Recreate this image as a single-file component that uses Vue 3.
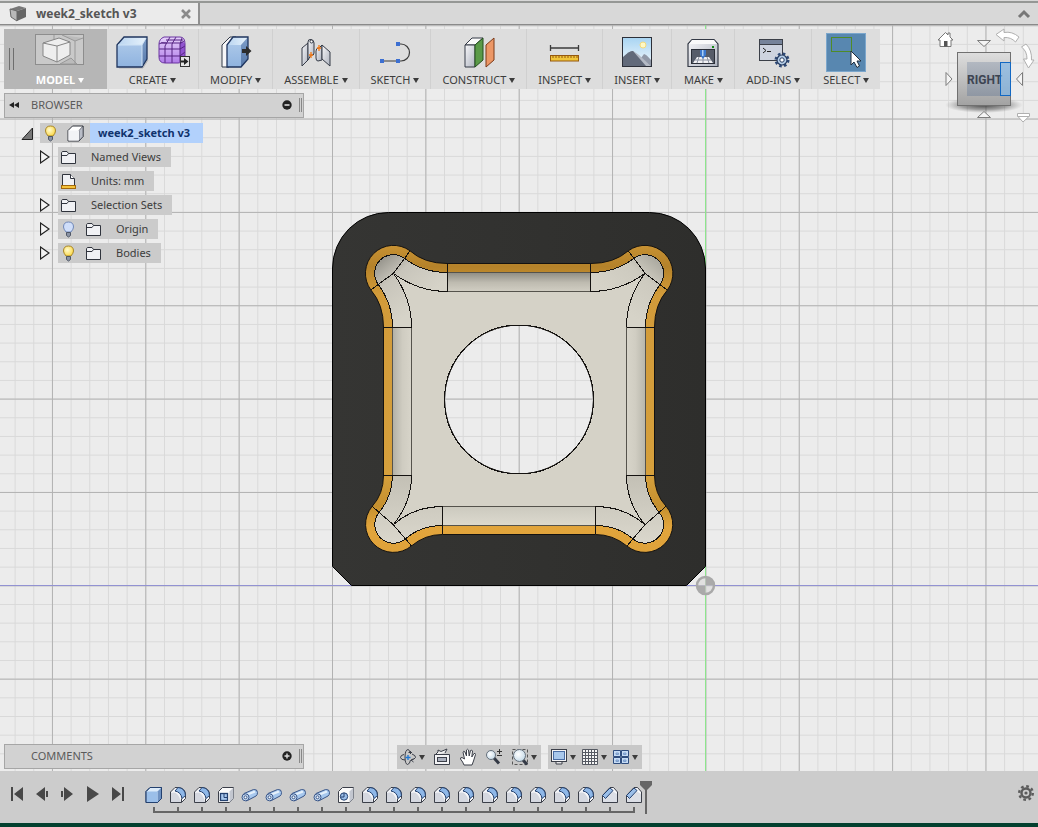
<script setup>
import { ref, computed } from 'vue';

const tools = [
  { name: 'CREATE', icons: ['box', 'mesh'], wide: true },
  { name: 'MODIFY', icons: ['modify'] },
  { name: 'ASSEMBLE', icons: ['assemble'] },
  { name: 'SKETCH', icons: ['sketch'] },
  { name: 'CONSTRUCT', icons: ['construct'] },
  { name: 'INSPECT', icons: ['inspect'] },
  { name: 'INSERT', icons: ['insert'] },
  { name: 'MAKE', icons: ['make'] },
  { name: 'ADD-INS', icons: ['addins'] },
  { name: 'SELECT', icons: ['select'] },
];

const nodes = ref([
  { name: 'Named Views', icons: ['folder'], expandable: true },
  { name: 'Units: mm', icons: ['units'], expandable: false },
  { name: 'Selection Sets', icons: ['folder'], expandable: true },
  { name: 'Origin', icons: ['bulb-off', 'folder'], expandable: true },
  { name: 'Bodies', icons: ['bulb-on', 'folder'], expandable: true },
]);

const transport = [
  { name: 'Go to start', path: 'M1 1h2v14h-2zM13 1v14l-9 -7z' },
  { name: 'Step back', path: 'M10 1v14l-9 -7zM11 5h2v6h-2z' },
  { name: 'Step forward', path: 'M1 5h2v6h-2zM4 1v14l9 -7z' },
  { name: 'Play', path: 'M2 0v16l12 -8z' },
  { name: 'Go to end', path: 'M2 1v14l9 -7zM12 1h2v14h-2z' },
];

const repeat = (name, count) => Array.from({ length: count }, () => name);

const features = computed(() => [
  'f-box',
  ...repeat('f-fillet', 2),
  'f-shell',
  ...repeat('f-cylinder', 4),
  'f-hole',
  ...repeat('f-fillet', 10),
  ...repeat('f-chamfer', 2),
]);

const viewTools = [
  { name: 'orbit', menu: true },
  { name: 'look', menu: false },
  { name: 'pan', menu: false },
  { name: 'zoom', menu: false },
  { name: 'fit', menu: true },
];

const displayTools = ['display', 'grid', 'views'];

const treeOpen = ref(true);
</script>

<template>
  <div class="app">
    <svg class="symbols" aria-hidden="true">
      <defs>
        <linearGradient id="g-front" x1="0" y1="0" x2="0" y2="1">
          <stop offset="0" stop-color="#a9c6e8" />
          <stop offset="1" stop-color="#8fb3df" />
        </linearGradient>
        <linearGradient id="g-side" x1="0" y1="0" x2="0" y2="1">
          <stop offset="0" stop-color="#7f9fca" />
          <stop offset="1" stop-color="#5577a8" />
        </linearGradient>
        <linearGradient id="g-top" x1="0" y1="0" x2="1" y2="0">
          <stop offset="0" stop-color="#b9d4f0" />
          <stop offset="1" stop-color="#e8f3fc" />
        </linearGradient>
        <linearGradient id="g-metal" x1="0" y1="0" x2="1" y2="1">
          <stop offset="0" stop-color="#f7f7f9" />
          <stop offset="1" stop-color="#aeb3bf" />
        </linearGradient>
        <linearGradient id="g-mesh" x1="0" y1="0" x2="0" y2="1">
          <stop offset="0" stop-color="#e6d2fb" />
          <stop offset="1" stop-color="#b07be8" />
        </linearGradient>
        <linearGradient id="g-sky" x1="0" y1="0" x2="0" y2="1">
          <stop offset="0" stop-color="#a8d4f2" />
          <stop offset="1" stop-color="#f2f9fd" />
        </linearGradient>
        <radialGradient id="g-yellow" cx="0.4" cy="0.4" r="0.6">
          <stop offset="0" stop-color="#fffbd0" />
          <stop offset="1" stop-color="#fbd94d" />
        </radialGradient>
        <radialGradient id="g-lens" cx="0.4" cy="0.4" r="0.6">
          <stop offset="0" stop-color="#ffffff" />
          <stop offset="1" stop-color="#c8dcea" />
        </radialGradient>
      </defs>

      <symbol id="i-box" viewBox="0 0 40 40">
        <path d="M7 36h24l5-8" fill="none" stroke="#b5b5b5" />
        <path d="M5 13L12 5H35L30 13Z" fill="url(#g-top)" />
        <path d="M30 13L35 5V27L30 35Z" fill="url(#g-side)" />
        <path d="M5 13H30V35H5Z" fill="url(#g-front)" />
        <path d="M5 13L12 5H35V27L30 35H5Z" fill="none" stroke="#1f355e" stroke-width="1.3" />
        <path d="M6 13H30V34M30 13L34 6" fill="none" stroke="#cfe2f5" stroke-width="1" />
      </symbol>

      <symbol id="i-mesh" viewBox="0 0 40 40">
        <path d="M11 5H27Q32 5 32 12V24Q31 31 25 31H12Q6 31 6 25V12Q6 7 11 5Z" fill="url(#g-mesh)" />
        <path d="M27 10Q31 9 32 12V24Q30 30 27 29Z" fill="#9154d0" />
        <path
          d="M6 17H27L32 14M6 24H27L32 20M8 11H28L31 9M13 8H30M12 31V14L17 5M19 31V12L23 5M27 30V12L29 6M6 12Q8 10 13 11"
          fill="none"
          stroke="#552381"
          stroke-width="1"
        />
        <path d="M11 5H27Q32 5 32 12V24Q31 31 25 31H12Q6 31 6 25V12Q6 7 11 5Z" fill="none" stroke="#6a35a0" />
        <rect x="27.5" y="24.5" width="9" height="10" fill="#e5e5e5" stroke="#333" />
        <path d="M28 28.500H31V26L35.500 29.500L31 33V30.500H28Z" fill="#222" />
      </symbol>

      <symbol id="i-modify" viewBox="0 0 40 40">
        <path d="M6 13L14 5H20L13 13V35H6Z" fill="#f6f6f8" stroke="#333a48" />
        <path d="M11 13L17 5H32L25 13Z" fill="url(#g-top)" />
        <path d="M25 13L32 5V27L25 35Z" fill="url(#g-side)" />
        <path d="M11 13H25V35H11Z" fill="url(#g-front)" />
        <path d="M11 13L17 5H32V27L25 35H11Z" fill="none" stroke="#1f355e" stroke-width="1.3" />
        <path d="M26 17H30V14L35.500 19L30 24V21H26Z" fill="#2c2c2c" />
      </symbol>

      <symbol id="i-assemble" viewBox="0 0 40 40">
        <path d="M6 16L12 11V28L6 34Z" fill="url(#g-metal)" stroke="#343a46" />
        <path d="M12 10Q12 7 15 7.500Q18 8 18 11V21Q18 24 15 23L12 28Z" fill="url(#g-metal)" stroke="#343a46" />
        <circle cx="15.500" cy="9.500" r="1.500" fill="#fff" stroke="#343a46" />
        <path d="M20 19Q20 16 23 16L26 13V28L22 29Q20 29 20 26Z" fill="url(#g-metal)" stroke="#343a46" />
        <path d="M26 13L34 20V34L26 27Z" fill="url(#g-metal)" stroke="#343a46" />
        <path d="M15 20V26M13 23H17M23 13V19M21 16H25" stroke="#f57a16" stroke-width="1.300" />
      </symbol>

      <symbol id="i-sketch" viewBox="0 0 40 40">
        <path d="M7 29H26A8.500 8.500 0 0 0 26 12H23" fill="none" stroke="#3b3b3b" stroke-width="1.200" />
        <path d="M5 27h4v4h-4zM21 27h4v4h-4zM21 10h4v4h-4z" fill="#3c6fd1" />
      </symbol>

      <symbol id="i-construct" viewBox="0 0 40 40">
        <path d="M6 13L13 6H24L16 13Z" fill="#fafafa" stroke="#343a46" />
        <path d="M6 13H16V35H6Z" fill="url(#g-metal)" stroke="#343a46" />
        <path d="M16 13L24 6V28L16 35Z" fill="#5a9a48" stroke="#24501e" />
        <path d="M27 13L35 6V28L27 35Z" fill="#ec9766" stroke="#7c3a18" />
      </symbol>

      <symbol id="i-inspect" viewBox="0 0 40 40">
        <path d="M5.500 13V19M33.500 13V19M5.500 16H33.500" stroke="#3b3b3b" stroke-width="1.300" />
        <rect x="5.500" y="23.500" width="28" height="5.500" fill="#f0c53a" stroke="#96590f" />
        <path d="M8 24v2M11 24v2M14 24v2M17 24v2M20 24v2M23 24v2M26 24v2M29 24v2M32 24v2" stroke="#96590f" />
      </symbol>

      <symbol id="i-insert" viewBox="0 0 40 40">
        <rect x="5.500" y="5.500" width="29" height="29" fill="url(#g-sky)" />
        <circle cx="26" cy="13" r="3" fill="#fff8c5" stroke="#f3da7d" />
        <path d="M6 26Q14 17 17 20L24 26L27 22Q29 22 34 28V34H6Z" fill="#9199a8" />
        <path d="M6 25Q13 18 16 19L34 34H6Z" fill="#626a7a" />
        <path d="M16 19L22 23L34 34H29Z" fill="#b4bac5" />
        <rect x="5.500" y="5.500" width="29" height="29" fill="none" stroke="#2c2f38" />
      </symbol>

      <symbol id="i-make" viewBox="0 0 40 40">
        <path d="M5 12L9 7.500H31L35 12V34.500H5Z" fill="url(#g-metal)" stroke="#343a46" stroke-width="1.200" />
        <path d="M6 12H34L31 8H9Z" fill="#fafafa" />
        <rect x="8.500" y="17.500" width="23" height="14" fill="#565c69" stroke="#2b2f38" />
        <path d="M10 31L14 25H26L30 31Z" fill="#f1f1f4" />
        <path d="M12 28H28M16 25L14 31M20 25V31M24 25L26 31" stroke="#8c92a0" />
        <path d="M17 18H23V23L20 27L17 23Z" fill="#3c79d0" />
        <path d="M19 18h1.500v6h-1.500z" fill="#a9d0f7" />
        <rect x="29" y="14" width="2" height="2" fill="#178a17" />
      </symbol>

      <symbol id="i-addins" viewBox="0 0 40 40">
        <rect x="6.500" y="7.500" width="23" height="21" fill="#cdd3df" stroke="#3b3f48" />
        <rect x="7" y="8" width="22" height="4" fill="#76839a" />
        <path d="M7 12.500H29" stroke="#3b3f48" />
        <path d="M10 16L13 18.500L10 21M14 19.500H18" fill="none" stroke="#222" />
        <circle cx="29" cy="28" r="6.300" fill="none" stroke="#2f4a77" stroke-width="2.400" stroke-dasharray="2.600 2.350" />
        <circle cx="29" cy="28" r="5" fill="#b6cee8" stroke="#23395f" stroke-width="1.200" />
        <circle cx="29" cy="28" r="2.200" fill="#fff" stroke="#23395f" />
      </symbol>

      <symbol id="i-select" viewBox="0 0 40 40">
        <rect x="0.500" y="1.500" width="39" height="38" fill="#5887b0" stroke="#7ba6cc" />
        <rect x="5.500" y="5.500" width="20" height="14" fill="none" stroke="#4f8b28" />
        <path d="M25 19V33L28 30L31 35.500L33.500 34L31 29H35Z" fill="#fff" stroke="#1f2b3a" />
      </symbol>

      <symbol id="i-bulb-on" viewBox="0 0 15 17">
        <path d="M7.500 1Q12.500 1 12.500 6Q12.500 8 10 11H5Q2.500 8 2.500 6Q2.500 1 7.500 1Z" fill="url(#g-yellow)" stroke="#a8862a" />
        <path d="M5.500 11.500H9.500V14.500L7.500 16L5.500 14.500Z" fill="#8b94a5" stroke="#4f5766" />
      </symbol>

      <symbol id="i-bulb-off" viewBox="0 0 15 17">
        <path d="M7.500 1Q12.500 1 12.500 6Q12.500 8 10 11H5Q2.500 8 2.500 6Q2.500 1 7.500 1Z" fill="#cfdefa" stroke="#7088b8" />
        <path d="M5.500 11.500H9.500V14.500L7.500 16L5.500 14.500Z" fill="#8b94a5" stroke="#4f5766" />
      </symbol>

      <symbol id="i-folder" viewBox="0 0 15 17">
        <path d="M0.500 14.500V3.500Q1 2.500 2 2.500H6L7.500 4.500H14.500V14.500Z" fill="#f0f1f4" stroke="#30343d" />
        <path d="M1 6.500H6L7.500 4.500" fill="none" stroke="#30343d" />
      </symbol>

      <symbol id="i-units" viewBox="0 0 15 17">
        <path d="M1.500 13V1.500H9.500L13.500 5.500V13Z" fill="#f0f1f4" stroke="#30343d" />
        <path d="M9.500 1.500V5.500H13.500" fill="#fff" stroke="#30343d" />
        <rect x="0.500" y="12.500" width="14" height="3" fill="#f5c33a" stroke="#a3690c" />
      </symbol>

      <symbol id="i-body" viewBox="0 0 17 17">
        <path d="M1 5.500L5.500 1H16V11.500L12 16H1Z" fill="#fff" stroke="#30343d" />
        <path d="M12 5.500L16 1V11.500L12 16Z" fill="#b9bdc7" stroke="#30343d" stroke-width="0.600" />
        <path d="M1.500 5.500H12V15.500H1.500Z" fill="#f2f3f6" />
      </symbol>

      <symbol id="i-f-box" viewBox="0 0 18 18">
        <path d="M1 5.500L5 1.500H16.500V12.500L12.500 16.500H1Z" fill="#dcebfa" stroke="#24416f" />
        <path d="M12.500 5.500L16.500 1.500V12.500L12.500 16.500Z" fill="#6f92c2" />
        <path d="M1.500 5.500H12.500V16H1.500Z" fill="#9bbfe9" />
        <path d="M1 5.500L5 1.500H16.500V12.500L12.500 16.500H1Z" fill="none" stroke="#24416f" />
      </symbol>

      <symbol id="i-f-fillet" viewBox="0 0 18 18">
        <path d="M1.500 6L6 1.500H9Q16.500 2 16.500 9V12.500L12.500 16.500H1.500Z" fill="#f4f5f8" stroke="#3b3f49" />
        <path d="M2 7Q9 4 12 16H2Z" fill="#d5d8e0" />
        <path d="M6 5L9 1.500Q16 2 16.500 9.500L13 12.500Q12 6 6 5Z" fill="#8fb8e8" stroke="#24416f" />
        <path d="M12.500 12.500V16.500" stroke="#3b3f49" />
      </symbol>

      <symbol id="i-f-shell" viewBox="0 0 18 18">
        <path d="M1.500 5.500L5.500 1.500H16.500V12.500L12.500 16.500H1.500Z" fill="#fafafa" stroke="#3b3f49" />
        <path d="M12.500 5.500L16.500 1.500V12.500L12.500 16.500Z" fill="#c3c7d0" />
        <rect x="3.500" y="7.500" width="7" height="7" fill="#a8c8ee" stroke="#24416f" stroke-width="1.300" />
        <path d="M7 8V11.500H10" fill="none" stroke="#24416f" />
      </symbol>

      <symbol id="i-f-cylinder" viewBox="0 0 18 18">
        <path d="M3 7.500L12.500 3.500Q16.500 3 16.500 6.500Q16.500 9 15 10L5.500 15Z" fill="#a7c8ee" stroke="#3a5688" />
        <path d="M6.500 8.500L14 5.500" stroke="#e5f0fb" stroke-width="2" />
        <circle cx="4.500" cy="11.300" r="3.500" fill="#c9def5" stroke="#3a5688" />
        <circle cx="4.500" cy="11.300" r="1.500" fill="#f5f8fc" stroke="#3a5688" />
      </symbol>

      <symbol id="i-f-hole" viewBox="0 0 18 18">
        <path d="M1.500 5.500L5.500 1.500H16.500V12.500L12.500 16.500H1.500Z" fill="#fafafa" stroke="#3b3f49" />
        <path d="M12.500 5.500L16.500 1.500V12.500L12.500 16.500Z" fill="#c3c7d0" />
        <circle cx="7" cy="10.500" r="3.700" fill="#9bbfe9" stroke="#24416f" />
        <path d="M7 7V11H3.500" fill="none" stroke="#24416f" />
      </symbol>

      <symbol id="i-f-chamfer" viewBox="0 0 18 18">
        <path d="M1.500 9.500L9 1.500H12.500L16.500 6V16.500H1.500Z" fill="#f8f9fb" stroke="#3b3f49" />
        <path d="M2 12H5L12 5.500L16 8V16H2Z" fill="#dcdfe6" />
        <path d="M1.500 9.500L9 2L12 4.500L4.500 12.500Z" fill="#9bbfe9" stroke="#24416f" />
      </symbol>

      <symbol id="i-orbit" viewBox="0 0 18 18">
        <path d="M9 1.500Q6 2 6 9Q6 16 8.500 16.500Q11 16 11.500 12M9 1.500Q10.500 2 11 4" fill="none" stroke="#3b3f49" />
        <path d="M13 6Q17 7.500 16.500 9.500Q15 12 12 12M6 12Q2 12 1.500 9.500Q1.500 7 5 6.500" fill="none" stroke="#3b3f49" />
        <path d="M9.500 4.500H13M11.500 3V6M12 12.500L14.500 10.500M12 12L14.500 14" fill="none" stroke="#3b3f49" />
        <path d="M9 7V12M6.500 9.500H11.500" stroke="#1d76d2" stroke-width="1.300" />
      </symbol>

      <symbol id="i-look" viewBox="0 0 18 18">
        <path d="M2 7L5 4V2L8 3.500L14 1L12 5" fill="#eee" stroke="#3b3f49" />
        <path d="M1.500 6.500H16.500V16.500H1.500Z" fill="#f3f3f5" stroke="#3b3f49" />
        <rect x="4.500" y="9.500" width="9" height="4" fill="#aab0bd" stroke="#3b3f49" />
      </symbol>

      <symbol id="i-pan" viewBox="0 0 18 18">
        <path
          d="M5 17Q4 14 1.500 11Q1 9.500 3 9.500L5.500 11L4 4Q4.500 2.500 6 4L7.500 8L7.500 2Q8.500 0.500 9.500 2L10.200 8L11.500 2.500Q13 1.500 13.500 3L12.800 9L15 5.500Q16.500 5 16.500 6.500L14.500 13L13 17Z"
          fill="#fff"
          stroke="#3b3f49"
        />
      </symbol>

      <symbol id="i-zoom" viewBox="0 0 18 18">
        <path d="M9 10L14 15.500" stroke="#343a46" stroke-width="3" />
        <circle cx="6" cy="7" r="4.500" fill="url(#g-lens)" stroke="#65707c" />
        <path d="M14.500 1V6M12 3.500H17M12 7.500H17" stroke="#333" />
      </symbol>

      <symbol id="i-fit" viewBox="0 0 18 18">
        <rect x="1.500" y="1.500" width="15" height="15" fill="none" stroke="#555" stroke-dasharray="3 2" />
        <path d="M12 12L16 16.500" stroke="#343a46" stroke-width="3" />
        <circle cx="8.500" cy="7.500" r="6" fill="url(#g-lens)" stroke="#65707c" />
      </symbol>

      <symbol id="i-display" viewBox="0 0 18 18">
        <path d="M6 13H12V16H6Z" fill="#e5e5e8" stroke="#3b3f49" />
        <rect x="1.500" y="1.500" width="15" height="12" fill="#f4f4f6" stroke="#3b3f49" />
        <rect x="3.500" y="3.500" width="11" height="8" fill="#a9c8ec" stroke="#4a6da4" />
      </symbol>

      <symbol id="i-grid" viewBox="0 0 18 18">
        <rect x="1.500" y="1.500" width="15" height="15" fill="#f5f5f5" />
        <path
          d="M1.500 1.500H16.500V16.500H1.500ZM4.500 1V17M7.500 1V17M10.500 1V17M13.500 1V17M1 4.500H17M1 7.500H17M1 10.500H17M1 13.500H17"
          fill="none"
          stroke="#555962"
        />
      </symbol>

      <symbol id="i-views" viewBox="0 0 18 18">
        <path d="M1.500 2.500H8.500V8.500H1.500ZM9.500 2.500H16.500V8.500H9.500ZM1.500 9.500H8.500V15.500H1.500ZM9.500 9.500H16.500V15.500H9.500Z" fill="#c6dcf5" stroke="#2f4d7e" />
        <path d="M4 5H6.500V6.500H4ZM11.500 5H14V6.500H11.500ZM4 12H6.500V13.500H4ZM11.500 12H14V13.500H11.500Z" fill="#9dbfe9" stroke="#7c9cc9" />
      </symbol>
    </svg>

    <svg class="canvas" role="img" aria-label="Model, right view">
      <defs>
        <pattern id="minor" x="705.4" y="585.3" width="18.67" height="18.67" patternUnits="userSpaceOnUse">
          <path d="M0.500 0V18.670M0 0.500H18.670" stroke="#d9d9d9" fill="none" />
        </pattern>
        <pattern id="major" x="705.4" y="585.3" width="93.35" height="93.35" patternUnits="userSpaceOnUse">
          <path d="M0.500 0V93.350M0 0.500H93.350" stroke="#b2b2b2" fill="none" />
        </pattern>
        <linearGradient id="rim" gradientUnits="userSpaceOnUse" x1="0" y1="245" x2="0" y2="552">
          <stop offset="0" stop-color="#c89233" />
          <stop offset="0.070" stop-color="#b5822a" />
          <stop offset="0.100" stop-color="#c08b2e" />
          <stop offset="0.160" stop-color="#d29b3a" />
          <stop offset="0.750" stop-color="#d6a03c" />
          <stop offset="0.850" stop-color="#c5902f" />
          <stop offset="0.920" stop-color="#e2a53c" />
          <stop offset="1" stop-color="#dfa23a" />
        </linearGradient>
        <linearGradient id="wall-top" x1="0" y1="0" x2="0" y2="1">
          <stop offset="0" stop-color="#918f86" />
          <stop offset="0.500" stop-color="#bebbb0" />
          <stop offset="1" stop-color="#d2cfc4" />
        </linearGradient>
        <linearGradient id="wall-left" x1="0" y1="0" x2="1" y2="0">
          <stop offset="0" stop-color="#b3b1a7" />
          <stop offset="0.500" stop-color="#cfccc1" />
          <stop offset="1" stop-color="#d8d5ca" />
        </linearGradient>
        <linearGradient id="wall-right" x1="0" y1="0" x2="1" y2="0">
          <stop offset="0" stop-color="#d8d5ca" />
          <stop offset="0.500" stop-color="#d0cdc2" />
          <stop offset="1" stop-color="#b9b7ac" />
        </linearGradient>
        <linearGradient id="wall-bottom" x1="0" y1="0" x2="0" y2="1">
          <stop offset="0" stop-color="#cbc9be" />
          <stop offset="1" stop-color="#dcd9ce" />
        </linearGradient>
        <linearGradient id="corner-tl" x1="0.100" y1="0" x2="0.650" y2="0.650">
          <stop offset="0" stop-color="#918f87" />
          <stop offset="0.400" stop-color="#c8c5bb" />
          <stop offset="1" stop-color="#d6d3c8" />
        </linearGradient>
        <linearGradient id="corner-tr" x1="0.900" y1="0" x2="0.350" y2="0.650">
          <stop offset="0" stop-color="#a6a49b" />
          <stop offset="0.400" stop-color="#cdcabf" />
          <stop offset="1" stop-color="#d6d3c8" />
        </linearGradient>
        <linearGradient id="corner-b" x1="0" y1="0" x2="0" y2="1">
          <stop offset="0" stop-color="#c3c0b5" />
          <stop offset="1" stop-color="#dad7cc" />
        </linearGradient>
        <linearGradient id="plate" x1="0" y1="0" x2="1" y2="0">
          <stop offset="0" stop-color="#353533" />
          <stop offset="1" stop-color="#2e2e2c" />
        </linearGradient>
      </defs>

      <rect width="100%" height="100%" fill="#ececec" />
      <rect width="100%" height="100%" fill="url(#minor)" />
      <rect width="100%" height="100%" fill="url(#major)" />
      <line x1="0" x2="100%" y1="585.5" y2="585.5" stroke="#9292d2" />
      <line x1="705.5" x2="705.5" y1="0" y2="100%" stroke="#8ce68c" />

      <path
        d="M332.500 268A56 56 0 0 1 388.500 212.500H649.500A56 56 0 0 1 705.500 268V566.500L686.500 585.500H351.500L332.500 566.500ZM444.500 399.500A74.500 74.500 0 0 0 593.500 399.500A74.500 74.500 0 0 0 444.500 399.500Z"
        fill="url(#plate)"
        fill-rule="evenodd"
        stroke="#000"
      />
      <path
        d="M447.300 263.500H590.700Q614 263.500 628.300 250.800A28 28 0 0 1 667.400 290Q654.500 304.500 654.500 327.300V475.300Q654.500 494 666.100 506.300A28 28 0 0 1 626.800 545.900Q613 534.500 595.300 534.500H442.300Q425 534.500 411.500 545.900A28 28 0 0 1 372.200 506.300Q383.500 494 383.500 475.300V327.300Q383.500 304.500 370.900 290A28 28 0 0 1 410 250.800Q424 263.500 447.300 263.500ZM444.500 399.500A74.500 74.500 0 0 0 593.500 399.500A74.500 74.500 0 0 0 444.500 399.500Z"
        fill="url(#rim)"
        fill-rule="evenodd"
        stroke="#141210"
      />
      <path
        d="M447.300 272.500H590.700Q615.500 272.500 633.900 258.300A18.700 18.700 0 0 1 660 284.500Q645.500 304 645.500 327.300V475.300Q645.500 496 659.100 512.400A18.700 18.700 0 0 1 632.800 538.800Q617 525.500 595.300 525.500H442.300Q421 525.500 405.500 538.800A18.700 18.700 0 0 1 379.200 512.400Q392.500 496 392.500 475.300V327.300Q392.500 304 378.300 284.500A18.700 18.700 0 0 1 404.400 258.300Q423 272.500 447.300 272.500ZM444.500 399.500A74.500 74.500 0 0 0 593.500 399.500A74.500 74.500 0 0 0 444.500 399.500Z"
        fill="#d5d2c7"
        fill-rule="evenodd"
      />
      <rect x="447" y="273" width="144" height="19" fill="url(#wall-top)" />
      <rect x="393" y="327" width="19" height="148" fill="url(#wall-left)" />
      <rect x="626" y="327" width="19" height="148" fill="url(#wall-right)" />
      <rect x="442" y="506" width="153" height="19" fill="url(#wall-bottom)" />
      <path
        d="M447.500 291.500Q418 291.500 393.300 273.300Q411.500 298 411.500 327.500H392.500Q392.500 304 378.300 284.500A18.700 18.700 0 0 1 404.400 258.300Q423 272.500 447.500 272.500Z"
        fill="url(#corner-tl)"
      />
      <path
        d="M590.500 291.500Q620 291.500 645 273.300Q626.500 298 626.500 327.500H645.500Q645.500 304 660 284.500A18.700 18.700 0 0 0 633.900 258.300Q615.500 272.500 590.500 272.500Z"
        fill="url(#corner-tr)"
      />
      <path
        d="M442.500 506.500Q414 506.500 393.300 524.700Q411.500 503 411.500 475.500H392.500Q392.500 496 379.200 512.400A18.700 18.700 0 0 0 405.500 538.800Q421 525.500 442.500 525.500Z"
        fill="url(#corner-b)"
      />
      <path
        d="M595.500 506.500Q624 506.500 645 524.700Q626.500 503 626.500 475.500H645.500Q645.500 496 659.100 512.400A18.700 18.700 0 0 1 632.800 538.800Q617 525.500 595.500 525.500Z"
        fill="url(#corner-b)"
      />
      <g fill="none" stroke="#55534c">
        <path d="M447 272.500H591M447 291.500H591M392.500 327V475M411.500 327V475M626.500 327V475M645.500 327V475M442 506.500H595M442 525.500H595" />
      </g>
      <g fill="none" stroke="#141210" shape-rendering="crispEdges">
        <path d="M447.500 263V291.500M590.500 263V291.500M383 327.500H411.500M626.500 327.500H655M383 475.500H411.500M626.500 475.500H655M442.500 506V534M595.500 506V534" />
        <path d="M447.500 272.500Q423 272.500 404.400 258.300A18.700 18.700 0 0 0 378.300 284.500Q392.500 304 392.500 327" />
        <path d="M590.500 272.500Q615.500 272.500 633.900 258.300A18.700 18.700 0 0 1 660 284.500Q645.500 304 645.500 327" />
        <path d="M392.500 475Q392.500 496 379.200 512.400A18.700 18.700 0 0 0 405.500 538.800Q421 525.500 442.500 525.500" />
        <path d="M645.500 475Q645.500 496 659.100 512.400A18.700 18.700 0 0 1 632.800 538.800Q617 525.500 595.500 525.500" />
        <path d="M447.500 291.500Q418 291.500 393.300 273.300Q411.500 298 411.500 327M590.500 291.500Q620 291.500 645 273.300Q626.500 298 626.500 327" />
        <path d="M442.500 506.500Q414 506.500 393.300 524.700Q411.500 503 411.500 475M595.500 506.500Q624 506.500 645 524.700Q626.500 503 626.500 475" />
        <path d="M410 251L393.300 273.300L371 290M628.300 251L645 273.300L667 290M372.200 506.300L393.300 524.700L411.500 545.900M666 506.300L645 524.700L627 545.900" />
        <circle cx="519" cy="399.500" r="74.500" />
      </g>
      <g>
        <circle cx="705.5" cy="585.5" r="8.5" fill="#dcdcdc" fill-opacity="0.7" stroke="#a9a9a9" stroke-width="2.500" />
        <path d="M705.500 585.500V577A8.500 8.500 0 0 1 714 585.500ZM705.500 585.500V594A8.500 8.500 0 0 1 697 585.500Z" fill="#aaaaaa" />
      </g>
    </svg>

    <header class="tabbar">
      <div class="tab">
        <svg class="tab-icon" width="18" height="18" viewBox="0 0 18 18">
          <path d="M1 4L10 1L17 3L8 6Z" fill="#777" />
          <path d="M8 6L17 3V12L8 16Z" fill="#666" />
          <path d="M1 4L8 6V16L2 12Z" fill="#b9b9b9" stroke="#666" />
        </svg>
        <span class="tab-title">week2_sketch v3</span>
        <button class="tab-close" aria-label="Close tab">
          <svg width="10" height="10" viewBox="0 0 10 10"><path d="M1 1L9 9M9 1L1 9" stroke="#8b8b8b" stroke-width="2.600" /></svg>
        </button>
      </div>
      <button class="collapse" aria-label="Collapse toolbar">
        <svg width="14" height="10" viewBox="0 0 14 10"><path d="M2 8L7 3L12 8" fill="none" stroke="#777" stroke-width="3" /></svg>
      </button>
    </header>

    <main class="workspace">
      <nav class="toolbar">
        <button class="workspace-switch">
          <span class="handle"></span>
          <span class="tool-body">
            <svg width="50" height="40" viewBox="0 0 50 40">
              <rect x="0.500" y="2.500" width="48" height="30" fill="#c9c9c9" stroke="#8d8d8d" />
              <path d="M19 3V10M27 3L40 9L48 6M40 9V32M36 26L42 32H25Z" fill="#bbb" stroke="#999" />
              <path d="M8 11L24 6L35 10V23L22 30L8 24Z" fill="#eee" stroke="#858585" />
              <path d="M8 11L22 14L35 10M22 14V30" fill="none" stroke="#858585" />
            </svg>
            <span class="tool-label">MODEL<i class="caret"></i></span>
          </span>
        </button>
        <button v-for="tool in tools" :key="tool.name" class="tool" :class="{ wide: tool.wide }">
          <span class="tool-icons">
            <svg v-for="icon in tool.icons" :key="icon" width="40" height="40"><use :href="'#i-' + icon" /></svg>
          </span>
          <span class="tool-label">{{ tool.name }}<i class="caret"></i></span>
        </button>
      </nav>

      <section class="panel browser-panel">
        <button class="panel-toggle" aria-label="Collapse browser">
          <svg width="10" height="6" viewBox="0 0 10 6"><path d="M5 0V6L0 3ZM10 0V6L5 3Z" fill="#222" /></svg>
        </button>
        <span class="panel-title">BROWSER</span>
        <button class="panel-button" aria-label="Minimize browser">
          <svg width="10" height="10" viewBox="0 0 10 10">
            <circle cx="5" cy="5" r="4.700" fill="#222" />
            <path d="M2.500 5H7.500" stroke="#ddd" stroke-width="1.600" />
          </svg>
        </button>
        <span class="grip"></span>
      </section>

      <div class="tree">
        <div class="tree-row root">
          <button class="expander" aria-label="Toggle document" @click="treeOpen = !treeOpen">
            <svg width="12" height="13" viewBox="0 0 12 13"><path d="M11.500 1V12.500H1Z" fill="#777" stroke="#222" /></svg>
          </button>
          <span class="tree-item">
            <svg width="15" height="17"><use href="#i-bulb-on" /></svg>
            <svg width="17" height="17"><use href="#i-body" /></svg>
            <span class="root-name">week2_sketch v3</span>
          </span>
        </div>
        <ul v-if="treeOpen" class="tree-list">
          <li v-for="node in nodes" :key="node.name" class="tree-row">
            <button v-if="node.expandable" class="expander" :aria-label="'Expand ' + node.name">
              <svg width="10" height="14" viewBox="0 0 10 14"><path d="M0.500 1V13L9 7Z" fill="#f4f4f4" stroke="#222" stroke-width="1.200" /></svg>
            </button>
            <span v-else class="expander"></span>
            <span class="tree-item">
              <svg v-for="icon in node.icons" :key="icon" width="15" height="17"><use :href="'#i-' + icon" /></svg>
              <span class="node-name">{{ node.name }}</span>
            </span>
          </li>
        </ul>
      </div>

      <svg class="viewcube" width="102" height="102" viewBox="936 25 102 102">
        <defs>
          <linearGradient id="cube" x1="0" y1="0" x2="0" y2="1">
            <stop offset="0" stop-color="#dedede" />
            <stop offset="1" stop-color="#a2a2a2" />
          </linearGradient>
          <linearGradient id="face" x1="0" y1="0" x2="0" y2="1">
            <stop offset="0" stop-color="#b2b8c1" />
            <stop offset="1" stop-color="#8f97a3" />
          </linearGradient>
          <radialGradient id="shade">
            <stop offset="0" stop-color="#333" stop-opacity="0.9" />
            <stop offset="0.600" stop-color="#555" stop-opacity="0.5" />
            <stop offset="1" stop-color="#777" stop-opacity="0" />
          </radialGradient>
        </defs>
        <ellipse cx="984" cy="105" rx="39" ry="8" fill="url(#shade)" />
        <rect x="957.5" y="52.5" width="53" height="53" fill="url(#cube)" stroke="#707070" />
        <rect x="967" y="62" width="34" height="34" fill="url(#face)" />
        <text x="967" y="84" class="cube-label">RIGHT</text>
        <rect x="1000.5" y="62.5" width="10" height="33" fill="#7eb6e8" fill-opacity="0.65" stroke="#1268c3" />
        <path d="M938 40L945.500 32.500L948 35V33H950V37L953 40H951V46.500H940V40Z" fill="#fff" stroke="#777" />
        <path d="M944 41H947.500V46.500H944Z" fill="#555" />
        <g fill="#f4f4f4" stroke="#7c7c7c">
          <path d="M977.500 40.500H990.500L984 46.500Z" />
          <path d="M977.500 117.500H990.500L984 111.500Z" />
          <path d="M946 72.500V85.500L952 79Z" />
          <path d="M1022.500 72.500V85.500L1016.500 79Z" />
        </g>
        <g fill="#fff" stroke="#b0b0b0">
          <path d="M996 34.500L1004 29V32.500Q1012 31 1019 37L1015.500 42Q1011 37 1004 37.500V41Z" />
          <path d="M1021.500 47L1026 44Q1032 50 1031.500 60H1034L1028.500 68L1023.500 59H1027Q1027 51 1021.500 47Z" />
          <path d="M1017.500 113.500H1029.500V116L1023 122L1017.500 116Z" />
          <path d="M1017.500 116.500H1029.500" />
        </g>
      </svg>

      <div class="bottom-row">
        <section class="panel comments-panel">
          <span class="panel-title">COMMENTS</span>
          <button class="panel-button" aria-label="Expand comments">
            <svg width="10" height="10" viewBox="0 0 10 10">
              <circle cx="5" cy="5" r="4.700" fill="#222" />
              <path d="M2.500 5H7.500M5 2.500V7.500" stroke="#ddd" stroke-width="1.400" />
            </svg>
          </button>
          <span class="grip"></span>
        </section>
        <div class="navbar">
          <div class="nav-group">
            <button v-for="item in viewTools" :key="item.name" class="nav-button" :aria-label="item.name">
              <svg width="18" height="18"><use :href="'#i-' + item.name" /></svg>
              <i v-if="item.menu" class="caret"></i>
            </button>
          </div>
          <div class="nav-group tight">
            <button v-for="name in displayTools" :key="name" class="nav-button" :aria-label="name">
              <svg width="18" height="18"><use :href="'#i-' + name" /></svg>
              <i class="caret"></i>
            </button>
          </div>
        </div>
      </div>
    </main>

    <footer class="timeline">
      <div class="transport">
        <button v-for="step in transport" :key="step.name" :aria-label="step.name">
          <svg width="15" height="16" viewBox="0 0 15 16"><path :d="step.path" fill="#484848" /></svg>
        </button>
      </div>
      <ol class="features">
        <li v-for="(feature, index) in features" :key="index">
          <button :aria-label="'Feature ' + (index + 1)">
            <svg width="18" height="18"><use :href="'#i-' + feature" /></svg>
          </button>
        </li>
      </ol>
      <svg class="marker" width="12" height="33" viewBox="0 0 12 33">
        <path d="M0 0H12V4L7 9V33H5V9L0 4Z" fill="#666" />
      </svg>
      <button class="settings" aria-label="Timeline settings">
        <svg width="16" height="16" viewBox="0 0 16 16">
          <circle cx="8" cy="8" r="6.800" fill="none" stroke="#5c5c5c" stroke-width="2.400" stroke-dasharray="2.700 2.640" />
          <circle cx="8" cy="8" r="4.500" fill="none" stroke="#5c5c5c" stroke-width="2.400" />
          <circle cx="8" cy="8" r="1.600" fill="#5c5c5c" />
        </svg>
      </button>
    </footer>
  </div>
</template>

<style>
body {
  margin: 0;
}
</style>

<style scoped>
.app {
  position: relative;
  display: flex;
  flex-direction: column;
  min-height: 100vh;
  font-family: 'Noto Sans', 'Open Sans', sans-serif;
  font-size: 11px;
  line-height: 14px;
  color: #3c3c3c;
  overflow: hidden;
}

.app *,
.app {
  box-sizing: border-box;
}

button {
  border: 0;
  padding: 0;
  background: none;
  font: inherit;
  color: inherit;
  cursor: pointer;
}

svg {
  display: block;
  flex: none;
}

.symbols {
  position: absolute;
  width: 0;
  height: 0;
}

.canvas {
  position: absolute;
  top: 0;
  left: 0;
  width: 100%;
  height: 100%;
}

.caret {
  display: inline-block;
  border: 3px solid transparent;
  border-top: 5px solid currentColor;
  border-bottom: 0;
}

.tabbar {
  position: relative;
  display: flex;
  justify-content: space-between;
  height: 25px;
  background: #d8d8d8;
  border-bottom: 1px solid #8a8a8a;
}

.tabbar::before {
  content: '';
  position: absolute;
  top: 1px;
  left: 0;
  right: 0;
  height: 2px;
  background: #959795;
}

.tab {
  display: flex;
  align-items: center;
  width: 200px;
  margin-top: 3px;
  padding: 0 7px 0 9px;
  background: #ebebeb;
  border-right: 2px solid #909090;
}

.tab-icon {
  margin-right: 9px;
}

.tab-title {
  flex: 1;
  font-size: 12px;
  font-weight: 700;
  color: #555;
}

.collapse {
  padding: 3px 7px 0;
}

.workspace {
  position: relative;
  flex: 1;
  display: flex;
  flex-direction: column;
  align-items: flex-start;
  padding: 4px 0 2px;
}

.toolbar {
  display: flex;
  height: 60px;
  margin-left: 4px;
  background: #dddddd;
}

.workspace-switch {
  display: flex;
  width: 103px;
  padding: 3px 3px 0 5px;
  background: #b6b6b6;
  color: #fff;
  font-weight: 700;
}

.handle {
  width: 5px;
  height: 22px;
  margin: 16px 2px 0 0;
  border: solid #6e6e6e;
  border-width: 0 1px;
}

.tool-body {
  flex: 1;
  display: flex;
  flex-direction: column;
  align-items: center;
}

.tool {
  display: flex;
  flex-direction: column;
  align-items: center;
  padding: 3px 11px 0;
  border-right: 1px solid #d0d0d0;
}

.tool.wide {
  padding: 3px 5px 0;
}

.tool:last-child {
  border-right: 0;
}

.tool-icons {
  display: flex;
  gap: 1px;
}

.tool-label {
  display: flex;
  align-items: center;
  gap: 3px;
  margin-top: 1px;
}

.panel {
  display: flex;
  align-items: center;
  width: 300px;
  height: 25px;
  margin-left: 4px;
  padding: 0 1px 1px 4px;
  background: #d2d2d2;
  border: 1px solid #a6a6a6;
  color: #5a5a5a;
}

.browser-panel {
  margin-top: 4px;
}

.panel-toggle {
  margin-right: 12px;
}

.panel-title {
  flex: 1;
}

.comments-panel {
  padding-left: 26px;
}

.panel-button {
  margin-right: 7px;
}

.grip {
  width: 3px;
  height: 14px;
  border: solid #888;
  border-width: 0 1px;
}

.tree {
  display: flex;
  flex-direction: column;
  gap: 4px;
  margin-top: 5px;
  padding-left: 21px;
}

.tree-list {
  display: flex;
  flex-direction: column;
  gap: 4px;
  margin: 0;
  padding: 0 0 0 18px;
  list-style: none;
}

.tree-row {
  display: flex;
  align-items: center;
  height: 20px;
}

.expander {
  width: 19px;
}

.tree-list .expander {
  padding-left: 1px;
}

.tree-item {
  display: flex;
  align-items: center;
  gap: 10px;
  height: 20px;
  padding: 0 10px 0 3px;
  background: #cbcbcb;
}

.root .tree-item {
  padding-right: 0;
  gap: 9px;
}

.node-name {
  margin-left: 5px;
}

.root-name {
  height: 20px;
  margin-left: -3px;
  padding: 0 13px 0 8px;
  line-height: 20px;
  background: #b2d1fc;
  color: #10336d;
  font-weight: 700;
}

.viewcube {
  position: absolute;
  top: 0;
  right: 0;
}

.cube-label {
  font-family: Roboto, sans-serif;
  font-size: 12px;
  font-weight: 700;
  fill: #3d4452;
}

.bottom-row {
  display: grid;
  grid-template-columns: 1fr auto 1fr;
  width: 100%;
  margin-top: auto;
}

.navbar {
  display: flex;
  align-items: flex-end;
  gap: 7px;
}

.nav-group {
  display: flex;
  align-items: center;
  gap: 8px;
  height: 24px;
  padding: 0 4px 0 2px;
  background: #c8c8c8;
}

.nav-group.tight {
  gap: 5px;
}

.nav-button {
  display: flex;
  align-items: center;
  gap: 2px;
}

.timeline {
  position: relative;
  display: flex;
  align-items: flex-start;
  height: 56px;
  padding: 10px 4px 0 10px;
  background: #cccccc;
  border-bottom: 4px solid #03402f;
}

.transport {
  display: flex;
  gap: 10px;
  margin: 5px 17px 0 0;
}

.features {
  display: flex;
  margin: 5px 0 0;
  padding: 0;
  list-style: none;
}

.features li {
  position: relative;
  display: flex;
  justify-content: center;
  width: 24px;
  height: 27px;
}

/* the rail runs from the middle of the first step to the middle of the last */
.features li::before {
  content: '';
  position: absolute;
  left: 0;
  right: 0;
  bottom: 0;
  height: 2px;
  background: #666;
}

.features li:first-child::before {
  left: 11px;
}

.features li:last-child::before {
  right: 11px;
}

.features li::after {
  content: '';
  position: absolute;
  left: 11px;
  bottom: 0;
  width: 2px;
  height: 6px;
  background: #666;
}

.features button {
  height: 18px;
}

.marker {
  margin-left: -6px;
}

.settings {
  margin: 4px 0 0 auto;
}
</style>
